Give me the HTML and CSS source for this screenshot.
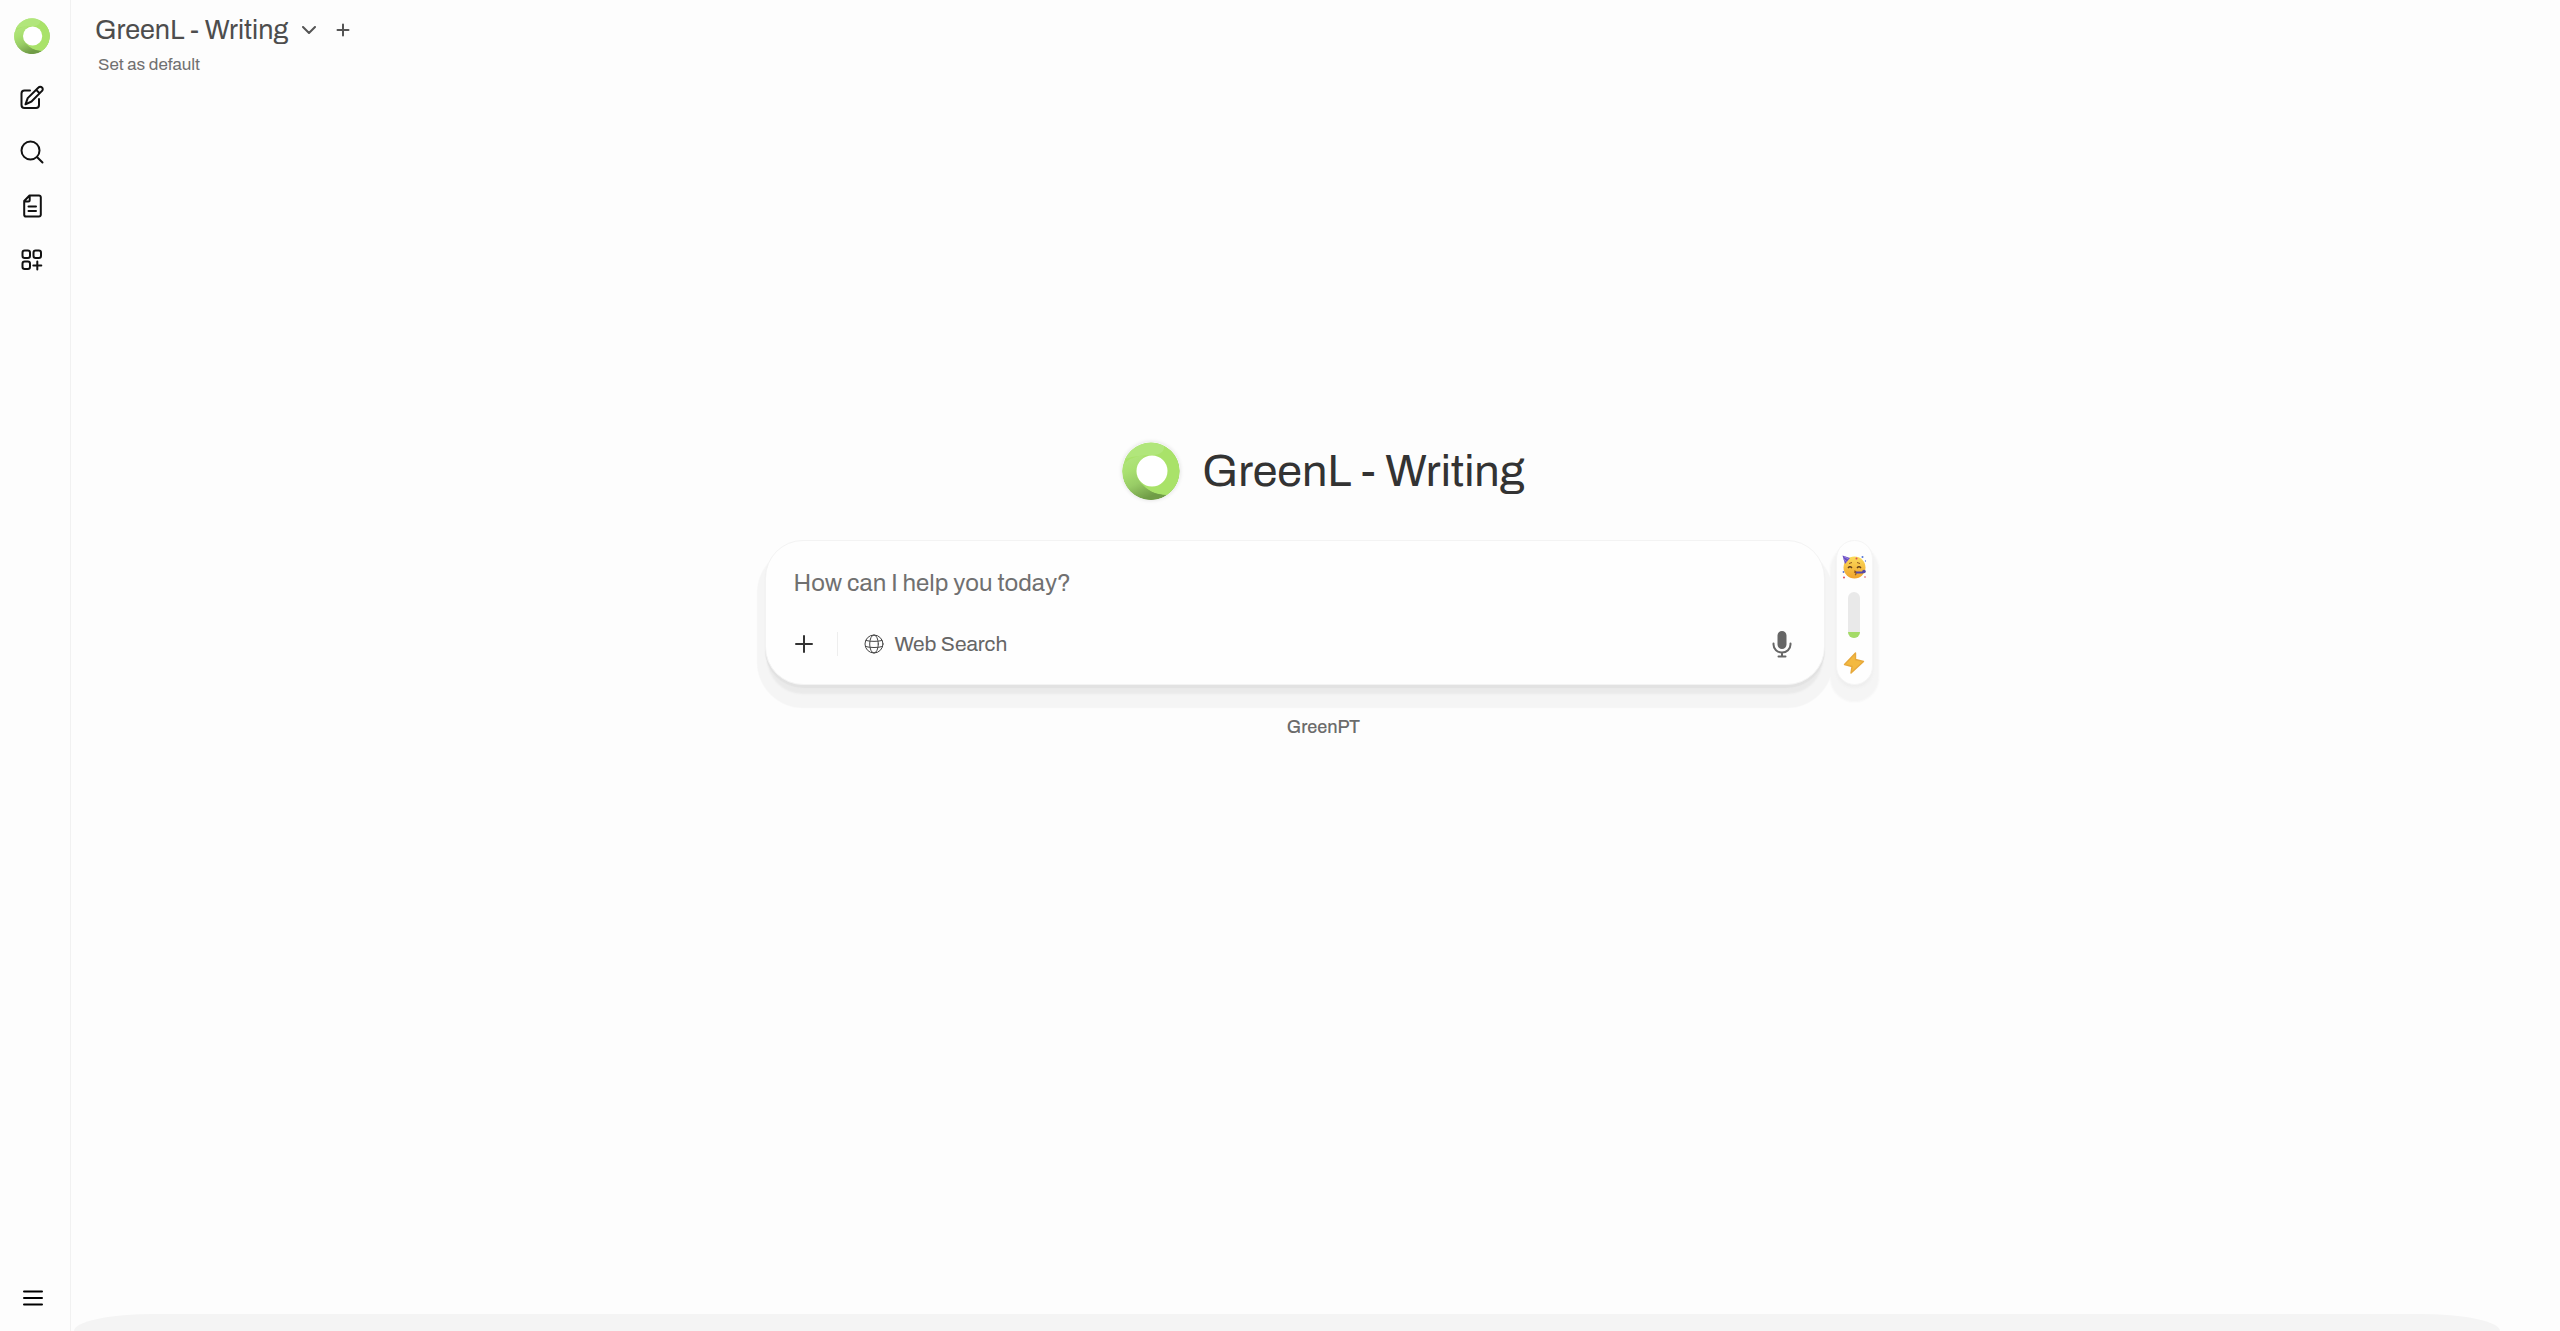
FILE: index.html
```html
<!DOCTYPE html>
<html lang="en">
<head>
<meta charset="utf-8">
<meta name="viewport" content="width=device-width, initial-scale=1">
<title>GreenL - Writing</title>
<link rel="stylesheet" href="styles.css">
</head>
<body>
<svg class="defs" aria-hidden="true">
  <defs>
    <linearGradient id="ring-shade" x1="0" y1="0" x2="0.45" y2="1">
      <stop offset="0" stop-color="#b4e681"/>
      <stop offset="0.35" stop-color="#a9e070"/>
      <stop offset="0.65" stop-color="#98cc66"/>
      <stop offset="1" stop-color="#709c46"/>
    </linearGradient>
    <linearGradient id="face" x1="0" y1="0" x2="0" y2="1">
      <stop offset="0" stop-color="#fbdc5c"/>
      <stop offset="1" stop-color="#f0a32c"/>
    </linearGradient>
    <symbol id="ring" viewBox="0 0 58 58">
      <circle cx="29" cy="29" r="28.5" fill="url(#ring-shade)"/>
      <path d="M3 17 C12 13 23 12 31 12 L42 4 A28.5 28.5 0 0 1 45 53 C34 53 22 48 16 38 Z" fill="#a9e269"/>
      <path d="M3 17 A28.5 28.5 0 0 1 42 4 C43 9 38 13 31 13 C21 13 12 14 3 17Z" fill="#b1e67b"/>
      <path d="M1 23 Q8 15 22 13 L14 30 Q16 42 30 50 Q38 54 45 53 A28.5 28.5 0 0 1 1 23Z" fill="url(#ring-shade)"/>
      <circle cx="30" cy="29" r="15.5" fill="#fff"/>
    </symbol>
  </defs>
</svg>
<div class="app">
  <nav class="sidebar" aria-label="Main">
    <a class="logo" href="#" aria-label="Home"><svg width="36" height="36"><use href="#ring"/></svg></a>
    <button class="side-btn" aria-label="New chat">
      <svg width="26" height="26" viewBox="0 0 26 26"><path d="M11 5.500H5.500a3 3 0 0 0-3 3V20a3 3 0 0 0 3 3H17a3 3 0 0 0 3-3v-6"/><path d="M19.500 2.500a2.300 2.300 0 0 1 3.500 0 2.300 2.300 0 0 1 0 3.400L12.500 16.500 6.500 19.300l2.200-6.200zM17.200 4.900l3.400 3.400"/></svg>
    </button>
    <button class="side-btn" aria-label="Search">
      <svg width="26" height="26" viewBox="0 0 26 26"><circle cx="11.500" cy="11.500" r="9"/><path d="M18.200 18.200 23.500 23.500"/></svg>
    </button>
    <button class="side-btn" aria-label="Notes">
      <svg width="26" height="26" viewBox="0 0 26 26"><path d="M10.500 2.500H20a1.800 1.800 0 0 1 1.800 1.800v17.400a1.800 1.800 0 0 1-1.800 1.800H7a1.800 1.800 0 0 1-1.800-1.800V8zM5.200 8.500h4a1.500 1.500 0 0 0 1.500-1.500V2.500M9.500 13.500h7.500M9.500 18h7.500"/></svg>
    </button>
    <button class="side-btn" aria-label="Workspace">
      <svg width="26" height="26" viewBox="0 0 26 26"><rect x="3.500" y="3.500" width="7.500" height="7.500" rx="2.200"/><rect x="14.500" y="3.500" width="7.500" height="7.500" rx="2.200"/><rect x="3.500" y="14.500" width="7.500" height="7.500" rx="2.200"/><path d="M18.300 14.500v8M14.300 18.500h8"/></svg>
    </button>
    <button class="side-btn menu-btn" aria-label="Open sidebar">
      <svg width="26" height="26" viewBox="0 0 26 26"><path d="M5 6.500h18M5 13h18M5 19.500h18"/></svg>
    </button>
  </nav>

  <main class="main">
    <header class="topbar">
      <div class="model-row">
        <button class="model">GreenL - Writing
          <svg width="14" height="8" viewBox="0 0 14 8"><path d="m1 1 6 6 6-6"/></svg>
        </button>
        <button class="add-model" aria-label="Add model"><svg width="14" height="14" viewBox="0 0 14 14"><path d="M7 1.500v11M1.500 7h11"/></svg></button>
      </div>
      <button class="default-btn">Set as default</button>
    </header>

    <section class="hero">
      <div class="title-row">
        <svg class="title-logo" width="58" height="58" aria-hidden="true"><use href="#ring"/></svg>
        <h1>GreenL - Writing</h1>
      </div>
      <div class="compose-row">
        <form class="composer">
          <input class="prompt" type="text" aria-label="Message" placeholder="How can I help you today?">
          <div class="tools">
            <button class="plus" type="button" aria-label="More"><svg width="20" height="20" viewBox="0 0 20 20"><path d="M10 2v16M2 10h16"/></svg></button>
            <span class="divider"></span>
            <button class="web" type="button">
              <svg width="20" height="20" viewBox="0 0 20 20"><circle cx="10" cy="10" r="9"/><ellipse cx="10" cy="10" rx="4.300" ry="9"/><path d="M2 6.500c4.500 1.200 11.500 1.200 16 0M1.500 12.500c4.500 1.400 12.500 1.400 17 0"/></svg>
              Web Search
            </button>
            <button class="mic" type="button" aria-label="Voice input">
              <svg width="20" height="28" viewBox="0 0 20 28"><rect x="6.500" y="2" width="7" height="16" rx="3.500" fill="#666"/><path d="M1.500 13.500v1a8.500 8 0 0 0 17 0v-1M10 22.500v4M6.500 26.500h7"/></svg>
            </button>
          </div>
        </form>
        <aside class="energy" aria-label="Energy use">
          <svg width="24" height="24" viewBox="0 0 24 24" role="img" aria-label="Party face">
            <circle cx="12.500" cy="12.500" r="11" fill="url(#face)"/>
            <path d="M.5.500 8 3 3 9z" fill="#6b4fc0"/>
            <path d="M2 1.500 6.500 4M1.500 4l3 2.500" stroke="#9780e4"/>
            <path d="M7 8.500l3-1M15 7.500l3 1" stroke="#925b1e"/>
            <path d="M6 13q2-2.500 4 0M15 13q2-2.500 4 0" fill="none" stroke="#63401b" stroke-width="1.300"/>
            <path d="M12 16q3 0 1 1.500 2 1 0 2.500" fill="none" stroke="#8c531d" stroke-width="1.200"/>
            <path d="M14 17.500h7" stroke="#5549a8" stroke-width="2"/>
            <circle cx="22" cy="16.500" r="1.800" fill="#5549a8"/>
            <g fill="#db4b59"><circle cx="2" cy="22.500" r="1"/><circle cx="14.500" cy="3.500" r="1"/><circle cx="23" cy="22" r=".8"/></g>
            <g fill="#5475d6"><circle cx="20.500" cy="2" r="1"/><circle cx="1.500" cy="17" r=".9"/><circle cx="23.500" cy="6" r=".7"/></g>
          </svg>
          <div class="meter" role="meter" aria-label="Energy" aria-valuemin="0" aria-valuemax="100" aria-valuenow="14"><span style="height:14%"></span></div>
          <svg width="22" height="22" viewBox="0 0 22 22" role="img" aria-label="Energy"><path d="M12.500 1 1.500 12.500l7.500 2L8 21l12.500-11.500-8-2z" fill="#f3b940" stroke="#e6a83b" stroke-width="1.400" stroke-linejoin="round"/></svg>
        </aside>
      </div>
      <p class="brand">GreenPT</p>
    </section>
    <footer class="footer"></footer>
  </main>
</div>
</body>
</html>
```

FILE: styles.css
```css
* { box-sizing: border-box; }
body {
  margin: 0;
  background: #fdfdfd;
  color: #4d4d4d;
  font-family: Archivo, "Liberation Sans", Arial, sans-serif;
}
button, input {
  margin: 0;
  padding: 0;
  border: 0;
  background: none;
  color: inherit;
  font: inherit;
}
button { cursor: pointer; }
svg { display: block; flex: none; }
.defs { position: absolute; width: 0; height: 0; }

.app { display: flex; min-height: 100vh; }

.sidebar {
  display: flex;
  flex-direction: column;
  align-items: center;
  flex: none;
  width: 71px;
  padding: 18px 7px 6px 0;
  border-right: 1px solid #f1f1f1;
}
.logo { margin-bottom: 17px; }
.side-btn {
  display: grid;
  place-items: center;
  width: 54px;
  height: 54px;
}
.side-btn svg {
  fill: none;
  stroke: #111;
  stroke-width: 2;
  stroke-linecap: round;
  stroke-linejoin: round;
}
.menu-btn { margin-top: auto; }
.menu-btn svg { stroke: #000; }

.main {
  display: flex;
  flex-direction: column;
  flex: 1;
  min-width: 0;
}
.topbar {
  display: flex;
  flex-direction: column;
  align-items: flex-start;
  padding: 14px 24px 0;
}
.model-row { display: flex; align-items: center; gap: 20px; }
.model {
  display: flex;
  align-items: center;
  gap: 14px;
  font-size: 27px;
  line-height: 32px;
}
.model svg, .add-model svg {
  fill: none;
  stroke: #555;
  stroke-width: 2;
  stroke-linecap: round;
  stroke-linejoin: round;
}
.default-btn {
  margin: 8px 0 0 3px;
  color: #707070;
  font-size: 17px;
  line-height: 22px;
}

.hero {
  display: flex;
  flex-direction: column;
  align-items: center;
  justify-content: center;
  flex: 1;
  padding: 0 24px 212px 40px;
}
.title-row { display: flex; align-items: center; gap: 22px; }
.title-logo { border-radius: 50%; box-shadow: 0 0 4px #ddd; }
h1 {
  margin: 0;
  color: #333;
  font-size: 45px;
  font-weight: 400;
  line-height: 60px;
}
.compose-row {
  display: flex;
  justify-content: center;
  gap: 11px;
  width: 100%;
  margin-top: 39px;
  padding-right: 10px;
}
.composer {
  display: flex;
  flex-direction: column;
  justify-content: space-between;
  flex: 0 1 1060px;
  min-width: 0;
  height: 145px;
  padding: 24px 28px 22px;
  border: 1px solid #f3f3f3;
  border-radius: 38px;
  background: #fefefe;
  box-shadow: 0 3px 1px #e2e2e2, 0 11px 2px -2px #eaeaea, 0 15px 1px 8px #f5f5f5;
}
.prompt {
  width: 100%;
  height: 36px;
  outline: 0;
  font-size: 24px;
}
.prompt::placeholder { color: #707070; opacity: 1; }
.tools { display: flex; align-items: center; height: 36px; }
.tools svg {
  fill: none;
  stroke: #666;
  stroke-width: 2;
  stroke-linecap: round;
}
.tools .plus svg { stroke: #333; }
.tools .web svg { stroke-width: 1; stroke: #444; }
.divider {
  width: 1px;
  height: 24px;
  margin: 0 26px 0 23px;
  background: #eee;
}
.web {
  display: flex;
  align-items: center;
  gap: 11px;
  color: #666;
  font-size: 21px;
}
.mic { margin: 0 4px 0 auto; }

.energy {
  display: flex;
  flex-direction: column;
  align-items: center;
  justify-content: space-between;
  flex: none;
  width: 37px;
  height: 145px;
  padding: 14px 0 10px;
  border: 1px solid #f5f5f5;
  border-radius: 19px;
  background: #fefefe;
  box-shadow: 0 3px 3px #eee, 0 11px 2px 6px #f5f5f5;
}
.meter {
  display: flex;
  align-items: flex-end;
  width: 12px;
  height: 46px;
  overflow: hidden;
  border-radius: 6px;
  background: #e9e9e9;
}
.meter span { width: 100%; background: #a4db68; }
.brand {
  margin: 31px 0 0;
  color: #6b6b6b;
  font-size: 18px;
  font-weight: 500;
  line-height: 22px;
}
.footer {
  height: 17px;
  margin: 0 60px 0 3px;
  border-radius: 80px 80px 0 0 / 17px 17px 0 0;
  background: #f4f4f4;
}
```
